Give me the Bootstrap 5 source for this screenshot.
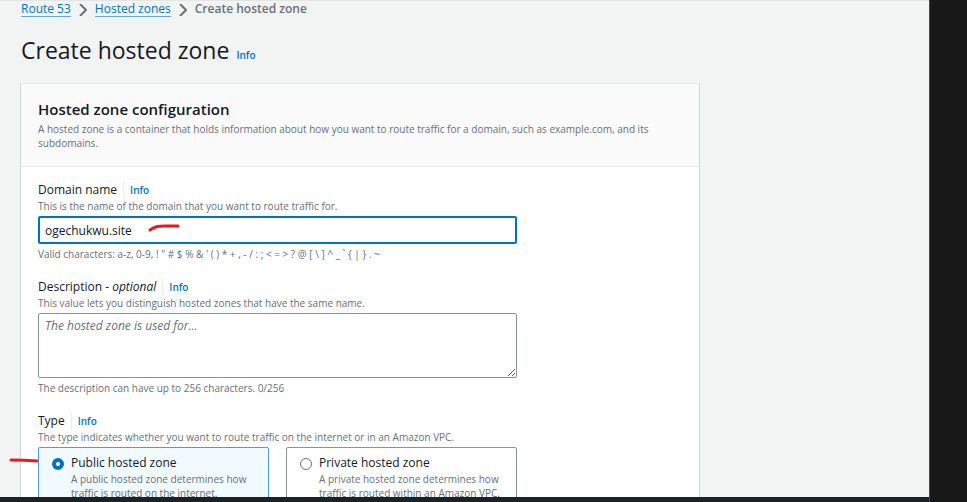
<!DOCTYPE html>
<html lang="en">
<head>
<meta charset="utf-8">
<meta name="viewport" content="width=device-width, initial-scale=1">
<title>Create hosted zone | Route 53</title>
<link href="https://cdn.jsdelivr.net/npm/bootstrap@5.3.0/dist/css/bootstrap.min.css" rel="stylesheet">
<style>
  body { font-family: "Open Sans", "Noto Sans", sans-serif; font-size: 12px; line-height: 16px; color: #16191f; background: #181818; }
  a { color: #0073bb; }
  .console { background: #f2f3f3; border-top: 1px solid #e4e6e6; }
  .desk-edge { flex: 0 0 38px; background: #181818; border-left: 1px solid #48494a; }
  .taskbar { flex: 0 0 5px; background: #1b2124; }
  .page { padding: 0 21px; }
  .crumbs { gap: 8px; color: #687078; }
  .crumbs a { line-height: 15px; text-decoration: none; border-bottom: 1px solid #63a8d4; }
  .crumbs .current { font-weight: 600; color: #687078; }
  .crumbs svg { margin-top: 3px; }
  .page-head { padding: 17px 0 17px; gap: 7px; }
  .page-title { font-size: 23px; line-height: 32px; font-weight: 400; }
  .info { font-size: 10px; font-weight: 600; text-decoration: none; }
  .panel { max-width: 680px; margin: 0 -1px; background: #fff; border: 1px solid #d0d7d8; border-top-color: #eaeded; border-radius: 0; }
  .panel-head { padding: 15px 17px 16px; background: #fafafa; border-bottom: 1px solid #eaeded; }
  .panel-title { font-size: 15px; line-height: 20px; font-weight: 600; margin-bottom: 3px; }
  .panel-body { padding: 13px 17px; }
  .hint { font-size: 10px; line-height: 14px; color: #687078; }
  .field { max-width: 479px; }
  .label-row { gap: 6px; height: 19px; }
  .label-row .info { padding-left: 6px; border-left: 1px solid #eaeded; line-height: 18px; }
  .control { margin: 3px 0; }
  .field .form-control { border: 1px solid #879596; border-radius: 2px; color: #16191f; font-size: 12px; line-height: 16px; padding: 4px 6px; box-shadow: none; }
  .field input.form-control { height: 28px; border: 2px solid #0073bb; padding: 4px 5px; }
  .field textarea.form-control { height: 65px; min-height: 0; resize: vertical; }
  .form-control::placeholder { color: #687078; font-style: italic; }
  .tiles { --bs-gutter-x: 17px; }
  .tile { padding: 7px 13px; border: 1px solid #879596; border-radius: 2px; gap: 7px; cursor: pointer; }
  .tile:has(input:checked) { background: #f1faff; border-color: #4b9fd5; }
  .tile input { flex: 0 0 12px; width: 12px; height: 12px; margin: 3px 0 0; border: 1px solid #687078; }
  .tile input:checked { border: 4px solid #0073bb; background: #fff; }
  .tile .hint { margin-top: 1px; }
  .ink { position: absolute; overflow: visible; fill: none; stroke: #e81a20; stroke-width: 3; stroke-linecap: round; pointer-events: none; }
  .ink-name { left: 112px; top: 9px; }
  .ink-type { left: -27px; top: 12px; }
</style>
<script src="https://cdn.jsdelivr.net/npm/bootstrap@5.3.0/dist/js/bootstrap.bundle.min.js"></script>
</head>
<body>
<div class="d-flex vh-100 overflow-hidden">
  <div class="d-flex flex-column flex-grow-1 overflow-hidden">
    <main class="console flex-grow-1 overflow-hidden">
      <div class="page">
        <nav aria-label="Breadcrumb">
          <ol class="crumbs list-unstyled d-flex align-items-start mb-0">
            <li class="d-flex"><a href="#">Route 53</a></li>
            <li aria-hidden="true"><svg class="d-block" width="8" height="12" viewBox="0 0 8 12" fill="none" stroke="currentColor" stroke-width="2"><path d="M1 0l6 6-6 6"/></svg></li>
            <li class="d-flex"><a href="#">Hosted zones</a></li>
            <li aria-hidden="true"><svg class="d-block" width="8" height="12" viewBox="0 0 8 12" fill="none" stroke="currentColor" stroke-width="2"><path d="M1 0l6 6-6 6"/></svg></li>
            <li class="current" aria-current="page">Create hosted zone</li>
          </ol>
        </nav>
        <header class="page-head d-flex align-items-baseline">
          <h1 class="page-title mb-0">Create hosted zone</h1>
          <a class="info" href="#">Info</a>
        </header>
        <section class="panel card">
          <div class="panel-head">
            <h2 class="panel-title">Hosted zone configuration</h2>
            <p class="hint mb-0">A hosted zone is a container that holds information about how you want to route traffic for a domain, such as example.com, and its subdomains.</p>
          </div>
          <form class="panel-body d-flex flex-column gap-3">
            <div class="field">
              <div class="label-row d-flex align-items-center"><label for="domain">Domain name</label><a class="info" href="#">Info</a></div>
              <div class="hint" id="domain-hint">This is the name of the domain that you want to route traffic for.</div>
              <div class="control position-relative">
                <input class="form-control" id="domain" type="text" value="ogechukwu.site" aria-describedby="domain-hint">
                <svg class="ink ink-name" width="28" height="6" viewBox="0 0 28 6" aria-hidden="true"><path d="M0 5C5 1 9 1 15 1L28 1"/></svg>
              </div>
              <div class="hint">Valid characters: a-z, 0-9, ! " # $ % &amp; ' ( ) * + , - / : ; &lt; = &gt; ? @ [ \ ] ^ _ ` { | } . ~</div>
            </div>
            <div class="field">
              <div class="label-row d-flex align-items-center"><label for="desc">Description - <em>optional</em></label><a class="info" href="#">Info</a></div>
              <div class="hint">This value lets you distinguish hosted zones that have the same name.</div>
              <div class="control"><textarea class="form-control d-block" id="desc" placeholder="The hosted zone is used for..."></textarea></div>
              <div class="hint">The description can have up to 256 characters. 0/256</div>
            </div>
            <div class="field" role="radiogroup" aria-labelledby="type-label">
              <div class="label-row d-flex align-items-center"><span id="type-label">Type</span><a class="info" href="#">Info</a></div>
              <div class="hint">The type indicates whether you want to route traffic on the internet or in an Amazon VPC.</div>
              <div class="control position-relative">
                <div class="row tiles">
                  <div class="col-6">
                    <label class="tile d-flex" for="public">
                      <input class="form-check-input" type="radio" name="zone" id="public" checked>
                      <span><span class="d-block">Public hosted zone</span><span class="hint d-block">A public hosted zone determines how traffic is routed on the internet.</span></span>
                    </label>
                  </div>
                  <div class="col-6">
                    <label class="tile d-flex" for="private">
                      <input class="form-check-input" type="radio" name="zone" id="private">
                      <span><span class="d-block">Private hosted zone</span><span class="hint d-block">A private hosted zone determines how traffic is routed within an Amazon VPC.</span></span>
                    </label>
                  </div>
                </div>
                <svg class="ink ink-type" width="26" height="4" viewBox="0 0 26 4" aria-hidden="true"><path d="M0 1Q14 1 26 2"/></svg>
              </div>
            </div>
          </form>
        </section>
      </div>
    </main>
    <footer class="taskbar"></footer>
  </div>
  <aside class="desk-edge"></aside>
</div>
</body>
</html>
